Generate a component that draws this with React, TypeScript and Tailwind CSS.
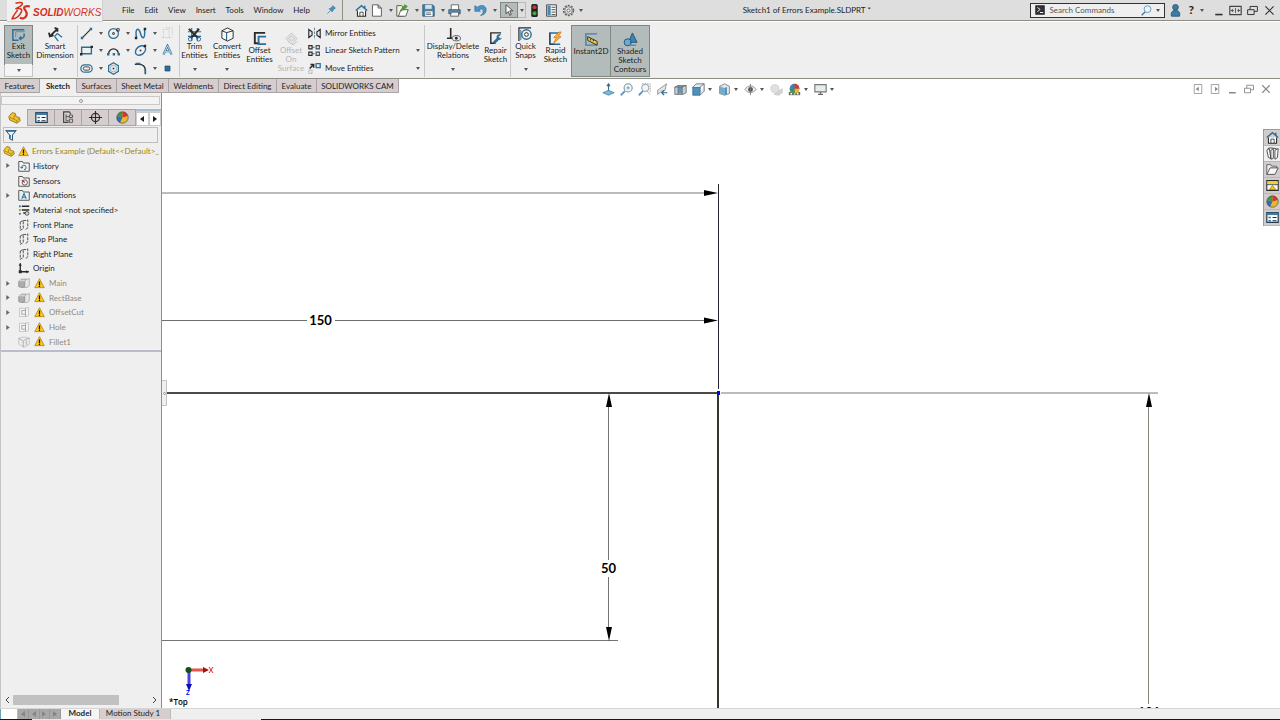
import React, { useState } from 'react';

// --- Icons, all drawn on a 16 x 16 grid ---
const B = '#2b6e99';
const K = '#2a2a2a';
const G = '#b9b9b9';

const icons: Record<string, React.ReactNode> = {
  exit: <><path d="M14 3H2v11h6" stroke={B} strokeWidth="1.6" /><path d="M14 3v2H5v6" stroke="#5d8fb0" /><path d="M14 7v3a3 3 0 0 1-3 2H9m2-2-2 2 2 2" stroke={B} strokeWidth="1.5" /></>,
  smart: <><path d="M3 9 10 2M7 1l3 1v3M1 6l1 4 4-1" stroke={K} strokeWidth="2" /><path d="m7 10 3-3 5 4M7 10l4 5" stroke={B} strokeWidth="1.4" /></>,
  line: <><path d="M3 13 13 3" stroke={K} strokeWidth="1.4" /><path d="M1 12h3v3H1zM12 1h3v3h-3z" fill={B} /></>,
  circle: <><circle cx="8" cy="8" r="6" stroke={B} strokeWidth="1.5" /><path d="M7 7h2v2H7zM12 2h3v3h-3z" stroke={K} /></>,
  spline: <><path d="M3 13C1 1 6 0 8 8s6 7 5-5" stroke={B} strokeWidth="1.8" /><path d="M1 12h3v3H1zM12 1h3v3h-3z" fill={K} /></>,
  ghost: <path d="M3 3h7v10H3zM6 1h8v10M1 13h3M10 13h4" stroke="#c9c9c9" strokeDasharray="2 1" />,
  rect: <><path d="M2 4h12v8H2z" stroke={B} strokeWidth="1.7" /><path d="M0 11h3v3H0zM13 2h3v3h-3z" fill={K} /></>,
  arc: <><path d="M2 12A6 6 0 0 1 14 12" stroke={K} strokeWidth="1.5" /><path d="M0 11h3v3H0zM13 11h3v3h-3zM7 11h3v3H7z" fill={B} /></>,
  ellipse: <><ellipse cx="8" cy="8" rx="7" ry="5" transform="rotate(-40 8 8)" stroke={B} strokeWidth="1.7" /><path d="M7 7h2v2H7zM12 1h3v3h-3z" fill={K} /></>,
  textA: <><path d="M3 13 8 2l5 11M5 9h6" stroke={B} strokeWidth="2.6" /><path d="M3 13 8 2l5 11M5 9h6M1 14h14" stroke="#dcecf5" /></>,
  slot: <><rect x="1" y="3.500" width="14" height="9" rx="4.500" stroke={B} strokeWidth="1.5" /><rect x="4" y="6" width="8" height="4" rx="2" stroke={K} /></>,
  hexagon: <><path d="m8 1 6 3.500v7L8 15l-6-3.500v-7z" stroke={B} strokeWidth="1.5" /><circle cx="8" cy="8" r="4" stroke="#8aa" /><path d="M7 7h2v2H7z" fill={K} /></>,
  fillet: <><path d="M1 3h5c5 0 8 3 8 8v4" stroke={K} strokeWidth="1.6" /><path d="M2 2h6M14 9v5" stroke={B} strokeWidth="2" /></>,
  point: <path d="M5 5h6v6H5z" fill={B} stroke="#174a6b" />,
  trim: <><path d="M1 5h14M1 10h14M5 1v14M11 1v4M11 10v5" stroke={B} strokeWidth="1.2" /><path d="m2 2 10 10M13 2 4 12" stroke={K} strokeWidth="2" /><circle cx="3.500" cy="13" r="2" stroke={B} /><circle cx="12.500" cy="13" r="2" stroke={B} /></>,
  convert: <><path d="m2 4 6-3 6 3v8l-6 3-6-3z" stroke={K} fill="#f8f8f8" /><path d="m2 4 5 2 7-2M7 6v9" stroke={K} /><path d="M7 6v8" stroke={B} /></>,
  offset: <><path d="M14 2H3v11h5" stroke={K} strokeWidth="2" /><path d="M15 6H7v8h8" stroke={B} strokeWidth="2" /></>,
  surface: <><path d="m2 8 6-6 6 6-6 6zM5 8l3-3 3 3-3 3zM4 11l6 4 4-4" stroke="#c4c4c4" fill="#e4e4e4" /></>,
  mirror: <><path d="M8 1v14" stroke={B} strokeDasharray="3 1.500" /><path d="M1 3l4 3v4l-4 3zM15 3l-4 3v4l4 3z" stroke={K} strokeWidth="1.4" /></>,
  pattern: <><path d="M1 2h4v4H1zM1 10h4v4H1z" stroke={K} strokeWidth="1.4" /><path d="M10 2h4v4h-4zM10 10h4v4h-4zM5 4h3M5 12h3" stroke="#41515c" strokeWidth="1.4" /></>,
  move: <><path d="M10 2h5v5h-5z" stroke={B} strokeWidth="1.6" /><path d="M1 10h4v4H1z" stroke="#777" strokeDasharray="1 1" /><path d="m2 8 5-5M3 3h4v4" stroke={K} strokeWidth="1.8" /></>,
  relations: <><path d="M5 1v11M1 12h8" stroke={K} strokeWidth="1.7" /><ellipse cx="11" cy="12" rx="4.500" ry="2.800" stroke="#555" fill="#eee" /><circle cx="11" cy="12" r="1.500" fill={K} /></>,
  repair: <><path d="M14 2H3v11h5" stroke={K} strokeWidth="1.5" /><path d="m6 13 6-6" stroke={B} strokeWidth="3" /><path d="M14 4a3 3 0 1 0 1 3l-2 1-2-2z" fill={B} /></>,
  snaps: <><path d="M14 1H1v14" stroke={K} strokeWidth="1.3" /><path d="M3 3v11" stroke={B} /><circle cx="9" cy="8" r="5" stroke={B} strokeWidth="1.5" /><circle cx="9" cy="8" r="2" stroke={K} fill="#fff" /></>,
  rapid: <><path d="M13 2H2v12h11" stroke={B} strokeWidth="1.6" /><path d="M2 2v12h5" stroke={K} /><path d="m12 1-6 6h3l-3 6 8-7h-3l3-5z" fill="#f5b52c" stroke="#d46a1c" strokeWidth=".7" /></>,
  instant: <><path d="M14 2H2v12h12" stroke="#477fa5" strokeWidth="1.5" /><path d="m4 5 10 5v4L4 9z" fill="#f1cf3f" stroke={K} /><path d="M7 7v2M10 8v2" stroke={K} /></>,
  shaded: <><path d="m10 1 5 10H6z" fill="#3f83b1" stroke="#1e5578" /><circle cx="5" cy="11" r="3.800" fill="#71a8cb" stroke="#1e5578" /><path d="M8 8v6h6" stroke={B} /></>,
  pin: <path d="m2 14 5-5M5 6l5 5 1-3 4-3-4-4-3 4z" fill="#4a91bf" stroke={B} />,
  home: <><path d="M3 8v7h10V8" fill="#fff" stroke={K} strokeWidth="1.3" /><path d="m1 8 7-6 7 6M12 2v3" stroke={B} strokeWidth="1.8" /><path d="M6 15v-5h4v5" stroke={K} /></>,
  page: <path d="M3 1h7l4 4v10H3zM10 1v4h4" fill="#fff" stroke="#444" />,
  open: <><path d="M1 2h6l2 2v11H1z" fill="#f4f1dc" stroke="#444" /><path d="m3 15 3-8h9l-3 8z" fill="#fff" stroke="#444" /><path d="M7 9c0-4 2-6 5-6m-2-2 3 2-3 3" stroke="#4c9d2f" strokeWidth="2" /></>,
  save: <><path d="M1 1h12l2 2v12H1z" fill="#4785ac" stroke="#27516e" /><path d="M4 1h8v5H4z" fill="#d8dfe4" /><path d="M4 9h9v6H4z" fill="#fff" /><path d="M5 11h6M5 13h6" stroke="#555" /></>,
  print: <><path d="M4 7V1h9v6" fill="#fff" stroke="#555" /><path d="M1 7h14v5H1z" fill="#5a91b4" stroke="#29506a" /><path d="M4 10h9v5H3z" fill="#f5f5f5" stroke="#555" /></>,
  undo: <path d="M1 2v7h7L6 7c4-2 6 0 5 4-.5 2-2 2-3 3 4 0 7-3 7-7 0-5-6-7-11-3z" fill="#4c94c3" stroke={B} strokeWidth=".8" />,
  cursor: <path d="M4 1v12l3-3 2 5 2-1-2-5h4z" fill="#fff" stroke={K} />,
  traffic: <><rect x="4" y="0" width="8" height="16" rx="2" fill="#222" /><circle cx="8" cy="4" r="2.500" fill="#c33b2c" /><circle cx="8" cy="11.500" r="2.500" fill="#42a83c" /></>,
  list: <><path d="M2 1h12v14H2z" fill="#fff" stroke={K} /><path d="M3 2h4v12H3z" fill="#4b86ad" /><path d="M8 4h5M8 7h5M8 10h5M8 13h5" stroke={K} /></>,
  gear: <><circle cx="8" cy="8" r="6" stroke="#666" strokeWidth="2" strokeDasharray="2.500 1.300" /><circle cx="8" cy="8" r="4.500" fill="#eee" stroke="#777" /><circle cx="8" cy="8" r="2" stroke="#555" /></>,
  prompt: <><path d="M1 1h14v14H1z" fill="#33303a" stroke="#111" /><path d="m4 4 4 3-4 4M8 12h5" stroke="#fff" strokeWidth="1.500" /></>,
  search: <><circle cx="9.500" cy="6" r="5" fill="#eef6fb" stroke="#5d93b6" strokeWidth="1.300" /><path d="m6 10-5 5" stroke="#3f7598" strokeWidth="2" /></>,
  user: <><circle cx="8" cy="4" r="3.500" fill="#3b7ca7" stroke="#1f506f" /><path d="M3 15c-1-5 1-7 5-7s6 2 5 7z" fill="#3b7ca7" stroke="#1f506f" /></>,
  min: <path d="M4 13h9" stroke="currentColor" strokeWidth="2" />,
  span: <><path d="M1 3h14v10H1z" stroke="#444" strokeWidth="1.400" /><path d="M8 5v6M2 8h4M10 8h4M5 6l-2 2 2 2M11 6l2 2-2 2" stroke="#444" /></>,
  restore: <><path d="M2 7h8v6H2zM5 7V3h9v6h-4" stroke="currentColor" strokeWidth="1.200" /></>,
  close: <path d="m3 3 10 10M13 3 3 13" stroke="currentColor" strokeWidth="1.500" />,
  paneL: <><path d="M3 2h10v12H3z" stroke="#888" /><path d="M9 5v6L5 8z" fill="#888" /></>,
  paneR: <><path d="M3 2h10v12H3z" stroke="#888" /><path d="M8 5v6l4-3z" fill="#888" /></>,
  normal: <><path d="M8 11V2M6 4l2-3 2 3" stroke="#3c6a86" strokeWidth="1.400" /><path d="m1 12 7-3 7 3-7 3z" fill="#82b5d2" stroke="#4787ab" /></>,
  zoomFit: <><circle cx="10" cy="6" r="5" fill="#eef6fa" stroke="#7d8f9a" strokeWidth="1.300" /><path d="M8 6h4M10 4v4" stroke="#5f8ca8" /><path d="m6 10-5 5" stroke="#6b99b5" strokeWidth="2.400" /></>,
  zoomArea: <><path d="M5 1h10v11" stroke="#999" strokeDasharray="2 1" /><circle cx="9" cy="6" r="4.500" fill="#eef6fa" stroke="#7d8f9a" /><path d="m6 10-5 5" stroke="#6b99b5" strokeWidth="2.400" /><path d="m11 10 4 4" stroke="#aaa" /></>,
  prevView: <><path d="m2 9 11-8-2 8-4 1-5 4z" fill="#e2e6e8" stroke="#888" /><path d="M14 12H7m3-3-3 3 3 3" stroke={B} strokeWidth="1.500" /></>,
  section: <><path d="m1 5 4-2h10v9l-4 2H1z" fill="#c6d0d5" stroke="#666" /><path d="M5 4h5v9H5z" fill="#5f9cc0" /><path d="M5 3v11M10 4v10M1 5h9l5-2" stroke="#666" /></>,
  viewCube: <><path d="M1 5h9v10H1z" fill="#4f93bc" stroke="#2d6a90" /><path d="m1 5 4-4h10l-5 4M15 1v9l-5 5" fill="#dfe9ee" stroke="#666" /></>,
  display: <><path d="m2 4 6-3 6 3v9l-6 2-6-2z" fill="#e3e9ec" stroke="#777" /><path d="m2 4 6 2v9l-6-2z" fill="#75acca" /><path d="M8 6v9l3-1V5z" fill="#4f93bc" /></>,
  eye: <><path d="M1 8c4-6 10-6 14 0-4 5-10 5-14 0z" fill="#eee" stroke="#888" /><circle cx="8" cy="8" r="3" fill="#555" /><path d="M8 1v14" stroke="#777" /></>,
  ghostBall: <><circle cx="6" cy="7" r="5" fill="#e0e0e0" stroke="#cfcfcf" /><path d="m5 14 10-7v5l-4 3z" fill="#d5d5d5" stroke="#c5c5c5" /></>,
  ball: <><circle cx="8" cy="8" r="7" fill="#e9b92e" /><path d="M8 8V1a7 7 0 0 0-6.500 5z" fill="#3d9c3e" /><path d="M8 8V1a7 7 0 0 1 6.500 5z" fill="#d8372b" /><path d="M8 8 1.500 6A7 7 0 0 0 5 14.500z" fill="#2f6fc0" /><circle cx="8" cy="8" r="7" stroke="#444" strokeWidth=".8" /></>,
  scene: <><path d="M1 11h14v4H1z" fill="#666" /><path d="M3 12h2v2H3zM7 12h2v2H7zM11 12h2v2h-2z" fill="#fff" /><circle cx="8" cy="7" r="6" fill="#3f7fbd" /><path d="M8 7V1a6 6 0 0 1 6 6z" fill="#d8372b" /><path d="M8 7h6a6 6 0 0 1-6 6z" fill="#e9b92e" /><path d="M8 7H2a6 6 0 0 0 6 6z" fill="#3d9c3e" /></>,
  monitor: <><path d="M1 2h14v9H1z" fill="#e6ebed" stroke="#777" strokeWidth="1.400" /><path d="M8 11v3M5 14h6" stroke="#666" strokeWidth="1.500" /></>,
  part: <><path d="m1 7 4-5 4 1 1 4 4 1 1 4-4 3-9-4z" fill="#f2c62f" stroke="#8b6a12" /><path d="m2 8 5 2 1-5M7 10l4 2 3-3M11 12v3" stroke="#a57d16" /></>,
  tree: <><path d="M1 2h14v12H1z" fill="#fff" stroke="#223c4f" strokeWidth="1.500" /><path d="M1 2h14v3H1z" fill="#3b7ca7" /><path d="M3 7h3v2H3zM3 11h3v2H3z" fill={B} /><path d="M8 8h5M8 12h5" stroke={K} strokeWidth="1.300" /></>,
  config: <><path d="M8 14H2V1h7l2 3" stroke="#444" strokeWidth="1.400" /><path d="M5 4v8h4M5 7h4M9 5h4v3H9zM9 10h4v4H9z" stroke="#444" /></>,
  target: <><circle cx="8" cy="8" r="5" stroke={K} strokeWidth="1.500" /><path d="M8 0v16M0 8h16" stroke={K} strokeWidth="1.400" /></>,
  funnel: <><path d="M1 2h14L10 8v7l-4-2V8z" fill="#e9f1f6" stroke="#24506d" strokeWidth="1.300" /><path d="M2 3h12M7 8v5" stroke="#3f86b2" strokeWidth="2" /></>,
  warn: <><path d="m8 1 7 13H1z" fill="#fbc718" stroke="#a8740d" strokeLinejoin="round" /><path d="M8 5v5M8 11v2" stroke="#111" strokeWidth="1.800" /></>,
  history: <><path d="M1 2h5l1 2h8v11H1z" fill="#f3f3f3" stroke="#555" strokeWidth="1.300" /><path d="M5 11a3 3 0 1 1 3 2M3 9l2 2 2-2" stroke={B} strokeWidth="1.300" /></>,
  sensor: <><path d="M1 2h5l1 2h8v11H1z" fill="#f3f3f3" stroke="#555" strokeWidth="1.300" /><circle cx="9" cy="10" r="3.500" stroke="#333" /><path d="m9 10-4-3" stroke="#b33" strokeWidth="1.400" /></>,
  annot: <><path d="M1 2h5l1 2h8v11H1z" fill="#e8f1f6" stroke="#555" strokeWidth="1.300" /><path d="m5 13 3-7 3 7M6 11h4" stroke={B} strokeWidth="1.400" /></>,
  material: <><path d="M5 3h10M5 8h10M7 12h4" stroke={K} strokeWidth="1.800" /><circle cx="2.500" cy="3" r="1.500" fill="#557fa0" /><circle cx="2.500" cy="8" r="1.500" fill="#c98c2d" /><circle cx="2.500" cy="13" r="1.500" fill="#557fa0" /><circle cx="12" cy="12.500" r="2.500" stroke={K} fill="#ddd" /></>,
  plane: <><path d="m3 4 4-2v11l-4 2zM7 2h4l2-1v11l-3 2" stroke="#444" strokeWidth="1.200" strokeDasharray="4 1.500" /></>,
  origin: <><path d="M3 2v11h11" stroke={K} strokeWidth="1.800" /><path d="m1 5 2-4 2 4zM11 11l4 2-4 2zM1 11h4v4H1z" fill={K} /></>,
  boss: <><path d="M5 3h8l2-1v10l-3 2H5z" fill="#e6e6e6" stroke="#a5a5a5" /><path d="M1 6h8v7l-4 1-4-1z" fill="#adadad" stroke="#8e8e8e" /><path d="m1 6 3-3h7L9 6" fill="#d4d4d4" stroke="#a0a0a0" /></>,
  cut: <><path d="M2 3h8l4-1v11l-4 1H2z" fill="#f4f4f4" stroke={G} /><path d="M5 6h5v5H5zM10 3v11" stroke="#a2a2a2" strokeWidth="1.200" /></>,
  filletF: <><path d="M1 3c5-2 9-2 14 0v8l-7 4-7-4z" fill="#ececec" stroke={G} /><path d="m1 3 6 4v8M7 7c3-3 5-3 8-4M11 6v6" stroke="#9b9b9b" /></>,
  library: <><path d="m1 4 3-2 2 12-3-1zM6 4l3-2v12l-3 1zM11 4l4-2-1 11-3 2z" fill="#fff" stroke="#333" /><path d="m2 2 3-1 8 1" stroke="#333" /></>,
  folder: <><path d="M1 14V2h5l1 2h6v2" fill="#eee" stroke="#555" /><path d="m1 14 4-8h10l-4 8z" fill="#f7f7f7" stroke="#555" strokeWidth="1.200" /></>,
  palette: <><path d="M1 2h14v12H1z" fill="#fff" stroke={K} strokeWidth="1.300" /><path d="M2 3h12v3H2z" fill="#f1cd27" /><path d="m4 13 4-5 4 5z" fill="#f1cd27" stroke="#a37d12" /><path d="M1 7h14" stroke={K} /></>,
};

function Icon({ name, className = 'size-3' }: { name: string; className?: string }) {
  return (
    <svg viewBox="0 0 16 16" fill="none" className={`shrink-0 ${className}`} aria-hidden="true">
      {icons[name]}
    </svg>
  );
}

function Caret({ className = '' }: { className?: string }) {
  return (
    <svg viewBox="0 0 4 3" className={`h-[3px] w-1 shrink-0 ${className}`} aria-hidden="true">
      <path d="M0 0h4L2 3z" fill="#555" />
    </svg>
  );
}

// --- Title bar ---
const menus = ['File', 'Edit', 'View', 'Insert', 'Tools', 'Window', 'Help'];

const quickTools = [
  { name: 'page', label: 'New' },
  { name: 'open', label: 'Open' },
  { name: 'save', label: 'Save' },
  { name: 'print', label: 'Print' },
  { name: 'undo', label: 'Undo' },
];

function TitleBar() {
  return (
    <header className="flex h-[21px] shrink-0 items-center border-b border-[#8d8d83] bg-[#dedede]">
      <div className="relative z-10 ml-[7px] flex h-[22px] w-24 shrink-0 items-center gap-0.5 self-start border-r border-b border-[#cfcfcf] bg-[#f1f0f0] pl-1 text-[#d6301f]">
        <svg viewBox="0 0 18 18" fill="none" stroke="currentColor" className="h-5 w-5" aria-hidden="true">
          <path d="M4 2c4-1 7-1 6 1S6 6 4 7c6-1 7 1 4 5-2 3-4 4-7 4 1-3 3-5 5-8" strokeWidth="1.400" />
          <path d="M17 5c-3-1-6 0-5 2s3 3 2 6-4 3-6 2" strokeWidth="2" />
        </svg>
        <span className="pt-1 font-['Liberation_Sans',sans-serif] text-[10px] italic"><b>SOLID</b>WORKS</span>
      </div>
      <nav className="ml-[19px] flex w-[188px] justify-between">
        {menus.map((m) => <button key={m}>{m}</button>)}
      </nav>
      <button aria-label="Pin menu" className="ml-4"><Icon name="pin" className="size-2.5" /></button>
      <div className="ml-1.5 h-full w-px bg-[#8d8d83]" />
      <button aria-label="Home" className="ml-3"><Icon name="home" className="size-[13px]" /></button>
      <div className="ml-0.5 flex">
        {quickTools.map((q) => (
          <button key={q.name} aria-label={q.label} className="flex w-[26px] items-center gap-1.5">
            <Icon name={q.name} className="size-[13px]" /><Caret />
          </button>
        ))}
      </div>
      <button aria-label="Select" className="flex h-4 w-[18px] items-center justify-center border border-[#7e8987] bg-[#b3bcba]"><Icon name="cursor" className="size-3" /></button>
      <button aria-label="Select options" className="flex h-4 w-2 items-center justify-center border border-l-0 border-[#b9b9b9]"><Caret /></button>
      <button aria-label="Rebuild" className="ml-0.5"><Icon name="traffic" className="size-[13px]" /></button>
      <button aria-label="File properties" className="ml-1"><Icon name="list" className="size-[13px]" /></button>
      <button aria-label="Options" className="ml-1 flex items-center gap-1"><Icon name="gear" className="size-[13px]" /><Caret /></button>
      <h1 className="flex-1 text-center">Sketch1 of Errors Example.SLDPRT *</h1>
      <div className="flex h-[15px] w-[135px] items-center gap-1 border border-[#333] bg-[#efefef] px-1">
        <Icon name="prompt" className="size-2.5" />
        <input aria-label="Search Commands" placeholder="Search Commands" className="min-w-0 flex-1 bg-transparent outline-none placeholder:text-[#555]" />
        <Icon name="search" className="size-[11px]" /><Caret />
      </div>
      <button aria-label="Account" className="ml-1"><Icon name="user" className="size-[13px]" /></button>
      <button aria-label="Help" className="ml-1.5 flex items-center gap-1.5"><span className="text-[12px] font-bold">?</span><Caret /></button>
      <div className="ml-2 flex gap-1 pr-1 text-[#333]">
        <button aria-label="Minimize"><Icon name="min" className="size-[13px]" /></button>
        <button aria-label="Span displays"><Icon name="span" className="size-[13px]" /></button>
        <button aria-label="Restore"><Icon name="restore" className="size-[13px]" /></button>
        <button aria-label="Close"><Icon name="close" className="size-[13px]" /></button>
      </div>
    </header>
  );
}

// --- Ribbon ---
interface RibbonButtonProps {
  icon: string;
  lines: string[];
  width: string;
  menu?: boolean;
  pressed?: boolean;
  disabled?: boolean;
}

function RibbonButton({ icon, lines, width, menu, pressed, disabled }: RibbonButtonProps) {
  return (
    <button
      disabled={disabled}
      className={`relative flex shrink-0 flex-col items-center ${width} ${menu ? 'pt-0.5' : 'pt-1.5'} ${pressed ? 'border border-[#7e8987] bg-[#b3bcba]' : ''} ${disabled ? 'text-[#b5b5b5]' : ''}`}
    >
      <Icon name={icon} className="size-[15px]" />
      <span className="flex flex-col items-center whitespace-nowrap">
        {lines.map((l) => <span key={l}>{l}</span>)}
      </span>
      {menu && <Caret className="mt-auto mb-1.5" />}
    </button>
  );
}

const Divider = () => <div className="w-px shrink-0 bg-[#c9c9c9]" />;

const sketchTools = [
  'line', 'circle', 'spline', 'ghost',
  'rect', 'arc', 'ellipse', 'textA',
  'slot', 'hexagon', 'fillet', 'point',
];
const noCaret = ['ghost', 'textA', 'hexagon', 'point'];

const listTools = [
  { name: 'mirror', label: 'Mirror Entities', menu: false },
  { name: 'pattern', label: 'Linear Sketch Pattern', menu: true },
  { name: 'move', label: 'Move Entities', menu: true },
];

function Ribbon() {
  return (
    <div className="flex h-[58px] shrink-0 border-t border-b border-t-white border-b-[#8d8d83] bg-[#efefef] pt-[3px] pb-px pl-1 leading-[9px]">
      <div className="flex w-[29px] shrink-0 flex-col border border-[#c4c4c4]">
        <button className="-m-px flex h-10 flex-col items-center border border-[#7e8987] bg-[#b3bcba] pt-px">
          <Icon name="exit" className="size-[15px]" />
          <span>Exit</span>
          <span>Sketch</span>
        </button>
        <button aria-label="Exit Sketch options" className="flex flex-1 items-center justify-center bg-[#f4f4f4]"><Caret /></button>
      </div>
      <RibbonButton icon="smart" lines={['Smart', 'Dimension']} width="w-11" menu />
      <Divider />
      <div className="grid w-[101px] shrink-0 grid-cols-[27px_27px_27px_1fr] items-center pl-0.5">
        {sketchTools.map((t) => (
          <button key={t} aria-label={t} className="flex items-center gap-1.5">
            <Icon name={t} className="size-[13px]" />
            {!noCaret.includes(t) && <Caret />}
          </button>
        ))}
      </div>
      <Divider />
      <RibbonButton icon="trim" lines={['Trim', 'Entities']} width="w-[29px]" menu />
      <RibbonButton icon="convert" lines={['Convert', 'Entities']} width="w-9" menu />
      <RibbonButton icon="offset" lines={['Offset', 'Entities']} width="w-[29px]" />
      <RibbonButton icon="surface" lines={['Offset', 'On', 'Surface']} width="w-[34px]" disabled />
      <div className="grid w-[116px] shrink-0">
        {listTools.map((t) => (
          <button key={t.name} className="flex items-center gap-1 pr-1 text-left">
            <Icon name={t.name} className="size-[13px]" />
            <span className="flex-1">{t.label}</span>
            {t.menu && <Caret />}
          </button>
        ))}
      </div>
      <Divider />
      <RibbonButton icon="relations" lines={['Display/Delete', 'Relations']} width="w-14" menu />
      <RibbonButton icon="repair" lines={['Repair', 'Sketch']} width="w-[29px]" />
      <Divider />
      <RibbonButton icon="snaps" lines={['Quick', 'Snaps']} width="w-[29px]" menu />
      <RibbonButton icon="rapid" lines={['Rapid', 'Sketch']} width="w-[31px]" />
      <RibbonButton icon="instant" lines={['Instant2D']} width="w-10" pressed />
      <RibbonButton icon="shaded" lines={['Shaded', 'Sketch', 'Contours']} width="w-10 -ml-px" pressed />
    </div>
  );
}

// --- Command tabs and view toolbar ---
const tabs = [
  { label: 'Features', width: 'w-10' },
  { label: 'Sketch', width: 'w-[37px]' },
  { label: 'Surfaces', width: 'w-10' },
  { label: 'Sheet Metal', width: 'w-[52px]' },
  { label: 'Weldments', width: 'w-[50px]' },
  { label: 'Direct Editing', width: 'w-[58px]' },
  { label: 'Evaluate', width: 'w-10' },
  { label: 'SOLIDWORKS CAM', width: 'w-[82px]' },
];

const viewTools = [
  { name: 'normal', menu: false }, { name: 'zoomFit', menu: false }, { name: 'zoomArea', menu: false },
  { name: 'prevView', menu: false }, { name: 'section', menu: false }, { name: 'viewCube', menu: true },
  { name: 'display', menu: true }, { name: 'eye', menu: true }, { name: 'ghostBall', menu: false },
  { name: 'scene', menu: true }, { name: 'monitor', menu: true },
];

function TabRow() {
  const [active, setActive] = useState('Sketch');
  return (
    <div className="relative z-10 flex h-3.5 shrink-0 bg-white">
      <div className="flex">
        {tabs.map((t) => (
          <button
            key={t.label}
            onClick={() => setActive(t.label)}
            className={`${t.width} whitespace-nowrap border-r border-b border-[#a9a3a5] ${active === t.label ? 'border-b-[#efefef] bg-[#efefef] font-bold' : 'bg-[#d6cdcf]'}`}
          >
            {t.label}
          </button>
        ))}
      </div>
      <div className="ml-[203px] flex items-center pt-1.5">
        {viewTools.map((v) => (
          <button key={v.name} aria-label={v.name} className={`flex items-center gap-[3px] ${v.menu ? 'w-[26px]' : 'w-[18px]'}`}>
            <Icon name={v.name} className="size-[13px]" />
            {v.menu && <Caret />}
          </button>
        ))}
      </div>
      <div className="ml-auto flex items-center gap-[5px] pt-1.5 pr-2 text-[#888]">
        {['paneL', 'paneR', 'min', 'restore', 'close'].map((n) => (
          <button key={n} aria-label={n}><Icon name={n} className="size-3" /></button>
        ))}
      </div>
    </div>
  );
}

// --- Feature tree ---
const treeItems = [
  { label: 'History', icon: 'history', expand: true },
  { label: 'Sensors', icon: 'sensor' },
  { label: 'Annotations', icon: 'annot', expand: true },
  { label: 'Material <not specified>', icon: 'material' },
  { label: 'Front Plane', icon: 'plane' },
  { label: 'Top Plane', icon: 'plane' },
  { label: 'Right Plane', icon: 'plane' },
  { label: 'Origin', icon: 'origin' },
  { label: 'Main', icon: 'boss', expand: true, warn: true },
  { label: 'RectBase', icon: 'boss', expand: true, warn: true },
  { label: 'OffsetCut', icon: 'cut', expand: true, warn: true },
  { label: 'Hole', icon: 'cut', expand: true, warn: true },
  { label: 'Fillet1', icon: 'filletF', warn: true },
];

function Arrow({ left = false, className = '' }: { left?: boolean; className?: string }) {
  return (
    <svg viewBox="0 0 4 6" className={`h-1.5 w-1 ${className}`} aria-hidden="true">
      <path d={left ? 'M4 0v6L0 3z' : 'M0 0v6l4-3z'} fill="currentColor" />
    </svg>
  );
}

function FeaturePanel() {
  return (
    <aside className="flex w-[162px] shrink-0 flex-col border-r border-l border-r-[#8e8e8e] border-l-[#c4c4c4] bg-[#efefef]">
      <div className="mt-[3px] mr-px flex h-[9px] shrink-0 items-center justify-center border border-[#c9c9c9] bg-[#f3f3f3]">
        <span className="size-1 rounded-full border border-[#999]" />
      </div>
      <div className="mt-1 flex h-[17px] shrink-0">
        {['part', 'tree', 'config', 'target', 'ball'].map((n, i) => (
          <button key={n} aria-label={n} className={`flex w-[27px] items-center justify-center border-r border-[#aaa4a6] ${i === 0 ? '' : 'border-t border-b bg-[#d6cdcf]'}`}>
            <Icon name={n} className="size-[13px]" />
          </button>
        ))}
        <div className="flex flex-1 items-end border-t-2 border-[#a9bccb] bg-[#d6cdcf]">
          <button aria-label="Scroll tabs left" className="flex h-3.5 flex-1 items-center justify-center border border-[#ccc] bg-white"><Arrow left className="h-1" /></button>
          <button aria-label="Scroll tabs right" className="flex h-3.5 flex-1 items-center justify-center border border-[#ccc] bg-white"><Arrow className="h-1" /></button>
        </div>
      </div>
      <label className="mt-px mr-[3px] ml-0.5 flex h-4 shrink-0 items-center border border-[#bdbdbd] pl-px">
        <Icon name="funnel" className="size-3" />
        <input aria-label="Filter tree" className="min-w-0 flex-1 bg-transparent outline-none" />
      </label>
      <ul className="mt-px grid h-[205px] shrink-0 grid-rows-[repeat(14,1fr)]">
        <li className="flex items-center gap-[3px] pl-0.5 whitespace-nowrap text-[#9a8620]">
          <Icon name="part" /><Icon name="warn" className="size-[11px]" />
          <span>Errors Example (Default&lt;&lt;Default&gt;_</span>
        </li>
        {treeItems.map((t) => (
          <li key={t.label} className={`flex items-center pl-[5px] ${t.warn ? 'text-[#8b8b80]' : ''}`}>
            <span className="w-3 text-[#666]">{t.expand && <Arrow className="h-[5px]" />}</span>
            <Icon name={t.icon} className="size-3" />
            {t.warn && <Icon name="warn" className="ml-1 size-[11px]" />}
            <span className={t.warn ? 'ml-1' : 'ml-[3px]'}>{t.label}</span>
          </li>
        ))}
      </ul>
      <div className="h-[3px] shrink-0 border-t border-[#fbf3df] bg-[#b9bccb]" />
      <div className="mt-auto mb-0.5 flex h-[13px] shrink-0 items-center gap-1 px-1 text-[#444]">
        <svg viewBox="0 0 4 6" className="h-1.5 w-1" fill="none" stroke="currentColor"><path d="M4 0 1 3l3 3" /></svg>
        <div className="h-2.5 flex-1"><div className="h-full w-[78%] bg-[#c1c1c1]" /></div>
        <svg viewBox="0 0 4 6" className="h-1.5 w-1" fill="none" stroke="currentColor"><path d="m0 0 3 3-3 3" /></svg>
      </div>
    </aside>
  );
}

// --- Sketch canvas ---
function Canvas() {
  return (
    <main className="relative min-w-0 flex-1 overflow-hidden bg-white">
      <svg className="absolute inset-0 h-full w-full" role="img" aria-label="Sketch1">
        <g transform="translate(-162 -93)">
          <g shapeRendering="crispEdges">
            <path d="M162 192h548v2H162z" fill="#bcbcbc" />
            <path d="M162 320h145v1H162zM335 320h375v1H335z" fill="#6a706d" />
            <path d="M718 184h1v205h-1z" fill="#2c2533" />
            <path d="M162 392h556v2H162z" fill="#4b4a4b" />
            <path d="M717 395h2v320h-2z" fill="#33382f" />
            <path d="M721 392h437v2H721z" fill="#bcbcbc" />
            <path d="M608 400h1v160h-1zM608 577h1v54h-1zM162 640h456v1H162z" fill="#74756f" />
            <path d="M1148 400h1v304h-1z" fill="#85867e" />
            <path d="M717 391h3v4h-3z" fill="#0000f5" />
          </g>
          <path d="M704 190v6l14-3zM704 317.500v6l14-3zM606 407h6l-3-14zM606 627h6l-3 14zM1146 407h6l-3-14z" fill="#000" />
          <g className="font-['Lato',sans-serif] text-[13px] font-bold" textAnchor="middle">
            <text x="320.500" y="325">150</text>
            <text x="608.500" y="573">50</text>
            <text x="1149" y="717">101</text>
          </g>
          <path d="M189 668.500h15v3h-15z" fill="#e2564a" />
          <path d="M203 667v6l6-3z" fill="#a31212" />
          <path d="M187.500 670h3v15h-3z" fill="#4747e0" />
          <path d="M186 684h6l-3 7z" fill="#0b0bb5" />
          <circle cx="188.500" cy="670" r="3" fill="#164f1c" />
          <path d="m209 667 4 6M213 667l-4 6" stroke="#e22" />
          <path d="M186.500 690.500h3l-3 4h3" stroke="#22e" fill="none" />
          <text x="169" y="705" className="font-['Open_Sans',sans-serif] text-[8px] font-semibold">*Top</text>
        </g>
      </svg>
      <button aria-label="Collapse panel" className="absolute top-[287px] left-0 flex h-[26px] w-[5px] items-center justify-center border border-l-0 border-[#c4c4c4] bg-[#efefef]">
        <span className="size-[3px] rounded-full border border-[#999]" />
      </button>
      <div className="absolute top-9 right-0 flex w-[17px] flex-col border-t border-l border-[#9b9b9b] bg-[#d3cccd]">
        {['home', 'library', 'folder', 'palette', 'ball', 'tree'].map((n) => (
          <button key={n} aria-label={n} className={`flex h-4 items-center justify-center border-b border-[#bdb7b9] ${n === 'library' ? 'bg-[#efefef]' : ''}`}>
            <Icon name={n} className="size-[13px]" />
          </button>
        ))}
      </div>
    </main>
  );
}

function BottomBar() {
  return (
    <footer className="shrink-0">
      <div className="flex h-[11px] border-t border-[#d5d5d5] bg-[#efefef] leading-[9px]">
        <div className="w-[18px] border-r border-l border-r-[#bbb] border-l-[#6da5b8] bg-white" />
        <div className="flex w-[43px] bg-[#a8a8a8] text-[#858585]">
          {['First', 'Previous', 'Next', 'Last'].map((n, i) => (
            <button key={n} aria-label={n} className="flex flex-1 items-center justify-center border-r border-[#999]"><Arrow left={i < 2} /></button>
          ))}
        </div>
        <button className="w-[38px] bg-[#f5f5f5] pb-px font-bold">Model</button>
        <button className="w-[72px] border-r border-l border-[#bbb] bg-[#d6cdcf] pr-1 pb-px">Motion Study 1</button>
      </div>
      <div className="flex h-px bg-[#15181f]">
        <div className="ml-8 w-[229px] bg-[#e6e6e6]" />
      </div>
    </footer>
  );
}

export default function App() {
  return (
    <div className="flex h-screen flex-col overflow-hidden bg-white font-['Lato',sans-serif] text-[8px] leading-[10px] text-[#1d1d1d] select-none">
      <TitleBar />
      <Ribbon />
      <TabRow />
      <div className="flex min-h-0 flex-1">
        <FeaturePanel />
        <Canvas />
      </div>
      <BottomBar />
    </div>
  );
}
